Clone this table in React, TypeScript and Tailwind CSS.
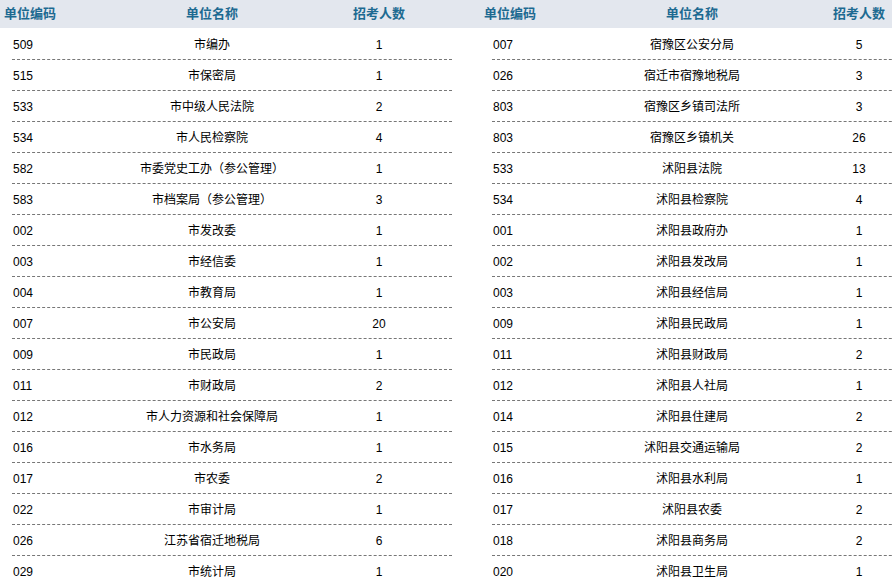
import React from 'react';

type Row = [string, string, string];

const leftRows: Row[] = [
    ['509', '市编办', '1'],
    ['515', '市保密局', '1'],
    ['533', '市中级人民法院', '2'],
    ['534', '市人民检察院', '4'],
    ['582', '市委党史工办（参公管理）', '1'],
    ['583', '市档案局（参公管理）', '3'],
    ['002', '市发改委', '1'],
    ['003', '市经信委', '1'],
    ['004', '市教育局', '1'],
    ['007', '市公安局', '20'],
    ['009', '市民政局', '1'],
    ['011', '市财政局', '2'],
    ['012', '市人力资源和社会保障局', '1'],
    ['016', '市水务局', '1'],
    ['017', '市农委', '2'],
    ['022', '市审计局', '1'],
    ['026', '江苏省宿迁地税局', '6'],
    ['029', '市统计局', '1'],
];

const rightRows: Row[] = [
    ['007', '宿豫区公安分局', '5'],
    ['026', '宿迁市宿豫地税局', '3'],
    ['803', '宿豫区乡镇司法所', '3'],
    ['803', '宿豫区乡镇机关', '26'],
    ['533', '沭阳县法院', '13'],
    ['534', '沭阳县检察院', '4'],
    ['001', '沭阳县政府办', '1'],
    ['002', '沭阳县发改局', '1'],
    ['003', '沭阳县经信局', '1'],
    ['009', '沭阳县民政局', '1'],
    ['011', '沭阳县财政局', '2'],
    ['012', '沭阳县人社局', '1'],
    ['014', '沭阳县住建局', '2'],
    ['015', '沭阳县交通运输局', '2'],
    ['016', '沭阳县水利局', '1'],
    ['017', '沭阳县农委', '2'],
    ['018', '沭阳县商务局', '2'],
    ['020', '沭阳县卫生局', '1'],
];

const font = { fontFamily: '"Liberation Sans", "Noto Sans CJK SC", sans-serif' };

const Table: React.FC<{ rows: Row[]; className?: string }> = ({ rows, className }) => (
    <div className={`shrink-0 ${className ?? ''}`}>
        <div className="h-[28px] bg-[#e3e7ee] pl-[4px] grid grid-cols-[108px_200px_134px] items-center text-[13px] font-bold text-[#1d6a91]">
            <div>单位编码</div>
            <div className="text-center">单位名称</div>
            <div className="text-center">招考人数</div>
        </div>
        <div className="pt-[1px]">
            {rows.map((r, i) => (
                <div
                    key={i}
                    className="ml-[12px] w-[440px] h-[31px] pt-[1px] border-b border-dashed border-[#777] grid grid-cols-[100px_200px_134px] items-center text-[12px] text-black"
                >
                    <div className="pl-[1px]">{r[0]}</div>
                    <div className="text-center">{r[1]}</div>
                    <div className="text-center">{r[2]}</div>
                </div>
            ))}
        </div>
    </div>
);

const App: React.FC = () => {
    return (
        <div className="w-[892px] h-[585px] overflow-hidden bg-white" style={font}>
            <div className="flex w-[932px] relative">
                <div className="absolute left-0 top-0 w-full h-[28px] bg-[#e3e7ee]" />
                <Table rows={leftRows} className="relative w-[452px] mr-[28px]" />
                <Table rows={rightRows} className="relative w-[452px]" />
            </div>
        </div>
    );
};

export default App;
